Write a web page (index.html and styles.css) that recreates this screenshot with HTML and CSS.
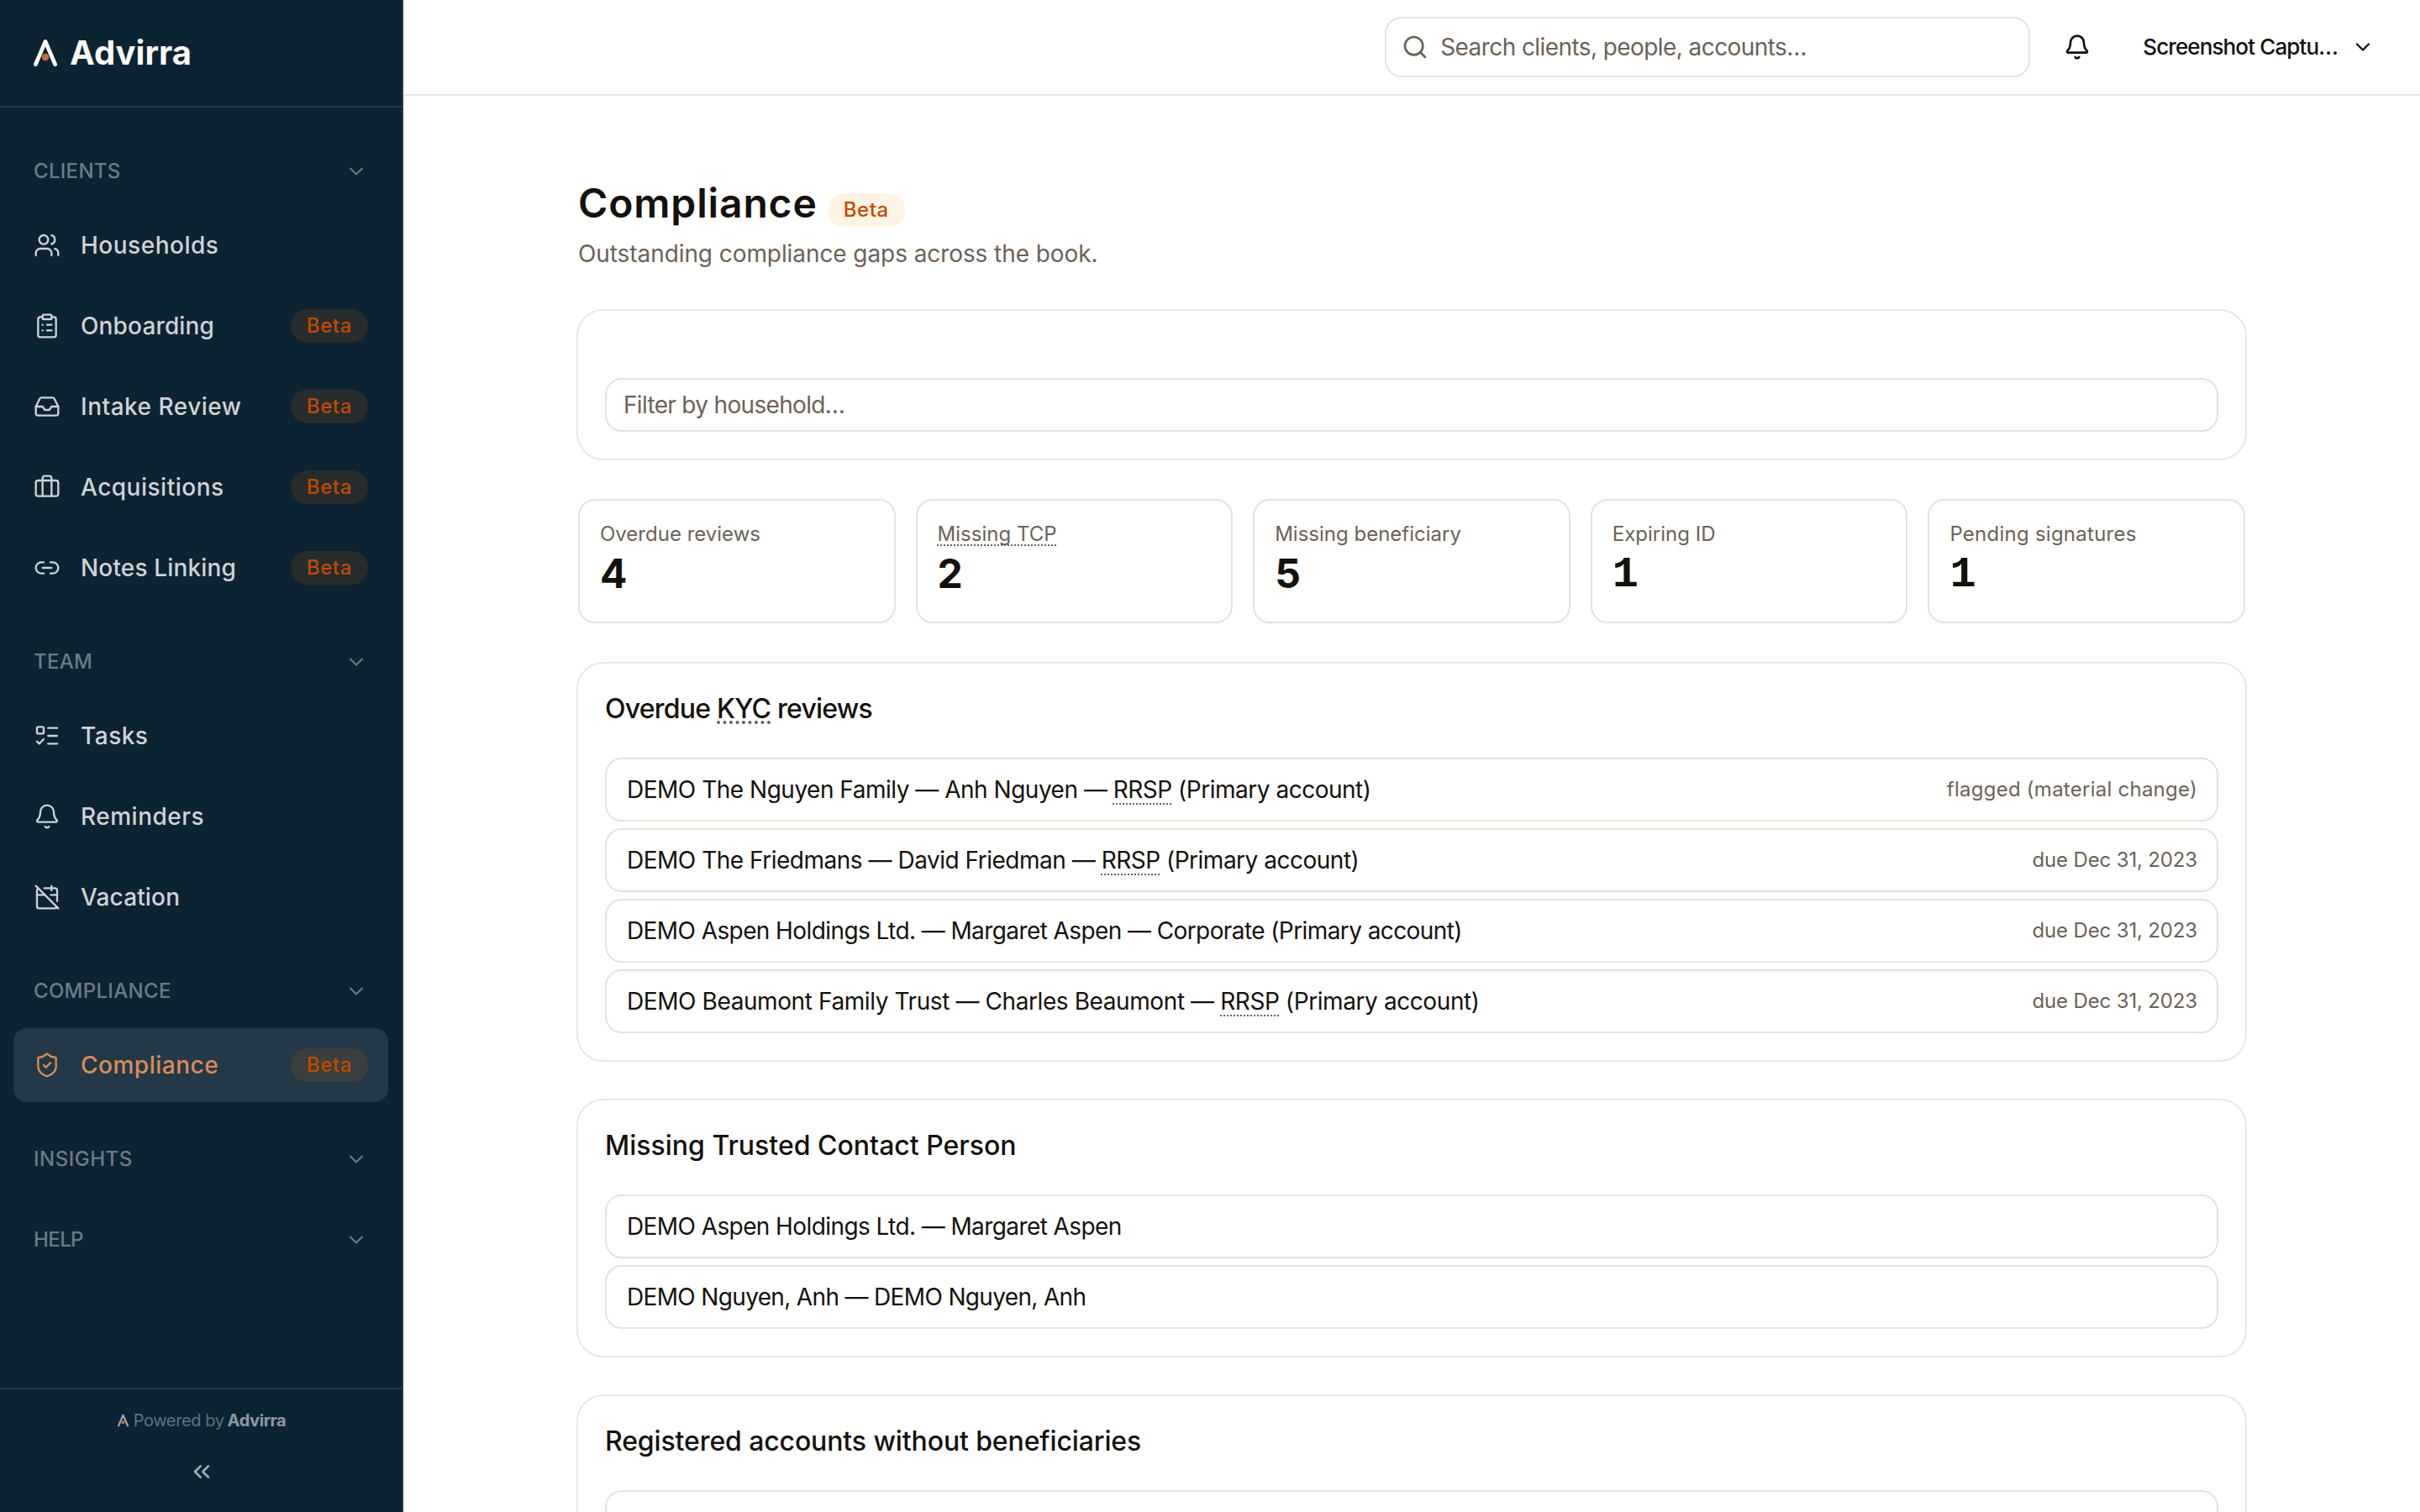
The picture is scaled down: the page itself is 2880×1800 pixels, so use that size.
FILE: index.html
```
<!doctype html>
<html lang="en">
  <head>
    <meta charset="utf-8">
    <title>Compliance - Advirra</title>
    <link rel="stylesheet" href="styles.css">
  </head>
  <body>
    <!-- shared icons -->
    <svg class="sprite">
      <symbol id="chevron" viewBox="0 0 24 24"><path d="m6 9 6 6 6-6"/></symbol>
      <symbol id="bell" viewBox="0 0 24 24"><path d="M10.268 21a2 2 0 0 0 3.464 0"/><path d="M3.262 15.326A1 1 0 0 0 4 17h16a1 1 0 0 0 .74-1.673C19.41 13.956 18 12.499 18 8A6 6 0 0 0 6 8c0 4.499-1.411 5.956-2.738 7.326"/></symbol>
      <symbol id="mark" viewBox="0 0 28 34"><path class="mark-leg" d="M2.4 30.6 14 3.4l11.6 27.2"/><circle class="mark-dot" cx="14" cy="22" r="4.2"/></symbol>
    </svg>

    <aside class="sidebar">
      <div class="brand">
        <svg class="brand-mark"><use href="#mark"/></svg>
        <span>Advirra</span>
      </div>

      <nav class="nav">
        <section>
          <h2 class="nav-title">CLIENTS <svg class="icon"><use href="#chevron"/></svg></h2>
          <ul class="nav-list">
            <li class="nav-item">
              <svg class="icon" viewBox="0 0 24 24"><path d="M16 21v-2a4 4 0 0 0-4-4H6a4 4 0 0 0-4 4v2"/><path d="M16 3.128a4 4 0 0 1 0 7.744"/><path d="M22 21v-2a4 4 0 0 0-3-3.87"/><circle cx="9" cy="7" r="4"/></svg>
              <span class="wide">Households</span>
            </li>
            <li class="nav-item">
              <svg class="icon" viewBox="0 0 24 24"><rect width="8" height="4" x="8" y="2" rx="1"/><path d="M16 4h2a2 2 0 0 1 2 2v14a2 2 0 0 1-2 2H6a2 2 0 0 1-2-2V6a2 2 0 0 1 2-2h2"/><path d="M12 11h4"/><path d="M12 16h4"/><path d="M8 11h.01"/><path d="M8 16h.01"/></svg>
              <span>Onboarding</span><em class="badge">Beta</em>
            </li>
            <li class="nav-item">
              <svg class="icon" viewBox="0 0 24 24"><path d="M22 12h-6l-2 3h-4l-2-3H2"/><path d="M5.45 5.11 2 12v6a2 2 0 0 0 2 2h16a2 2 0 0 0 2-2v-6l-3.45-6.89A2 2 0 0 0 16.76 4H7.24a2 2 0 0 0-1.79 1.11z"/></svg>
              <span class="wide">Intake Review</span><em class="badge">Beta</em>
            </li>
            <li class="nav-item">
              <svg class="icon" viewBox="0 0 24 24"><path d="M16 20V4a2 2 0 0 0-2-2h-4a2 2 0 0 0-2 2v16"/><rect width="20" height="14" x="2" y="6" rx="2"/></svg>
              <span class="wide">Acquisitions</span><em class="badge">Beta</em>
            </li>
            <li class="nav-item">
              <svg class="icon" viewBox="0 0 24 24"><path d="M9 17H7A5 5 0 0 1 7 7h2"/><path d="M15 7h2a5 5 0 1 1 0 10h-2"/><path d="M8 12h8"/></svg>
              <span>Notes Linking</span><em class="badge">Beta</em>
            </li>
          </ul>
        </section>

        <section>
          <h2 class="nav-title">TEAM <svg class="icon"><use href="#chevron"/></svg></h2>
          <ul class="nav-list">
            <li class="nav-item">
              <svg class="icon" viewBox="0 0 24 24"><path d="M13 5h8"/><path d="M13 12h8"/><path d="M13 19h8"/><path d="m3 17 2 2 4-4"/><rect x="3" y="4" width="6" height="6" rx="1"/></svg>
              <span class="wide">Tasks</span>
            </li>
            <li class="nav-item">
              <svg class="icon"><use href="#bell"/></svg>
              <span class="wide">Reminders</span>
            </li>
            <li class="nav-item">
              <svg class="icon" viewBox="0 0 24 24"><path d="M4.2 4.2A2 2 0 0 0 3 6v14a2 2 0 0 0 2 2h14a2 2 0 0 0 1.82-1.18"/><path d="M21 15.5V6a2 2 0 0 0-2-2H9.5"/><path d="M16 2v4"/><path d="M3 10h7"/><path d="M21 10h-5.5"/><path d="m2 2 20 20"/></svg>
              <span>Vacation</span>
            </li>
          </ul>
        </section>

        <section>
          <h2 class="nav-title">COMPLIANCE <svg class="icon"><use href="#chevron"/></svg></h2>
          <ul class="nav-list">
            <li class="nav-item active">
              <svg class="icon" viewBox="0 0 24 24"><path d="M20 13c0 5-3.5 7.5-7.66 8.95a1 1 0 0 1-.67-.01C7.5 20.5 4 18 4 13V6a1 1 0 0 1 1-1c2 0 4.5-1.2 6.24-2.72a1.17 1.17 0 0 1 1.52 0C14.51 3.81 17 5 19 5a1 1 0 0 1 1 1z"/><path d="m9 12 2 2 4-4"/></svg>
              <span class="wide">Compliance</span><em class="badge">Beta</em>
            </li>
          </ul>
        </section>

        <section>
          <h2 class="nav-title wide">INSIGHTS <svg class="icon"><use href="#chevron"/></svg></h2>
        </section>
        <section>
          <h2 class="nav-title help">HELP <svg class="icon"><use href="#chevron"/></svg></h2>
        </section>
      </nav>

      <div class="sidebar-foot">
        <p class="powered"><svg class="powered-mark"><use href="#mark"/></svg><span>Powered by</span> <b>Advirra</b></p>
        <svg class="icon collapse" viewBox="0 0 24 24"><path d="m11 17-5-5 5-5"/><path d="m18 17-5-5 5-5"/></svg>
      </div>
    </aside>

    <div class="page">
      <header class="topbar">
        <div class="search">
          <svg class="icon" viewBox="0 0 24 24"><path d="m21 21-4.34-4.34"/><circle cx="11" cy="11" r="8"/></svg>
          <span>Search clients, people, accounts…</span>
        </div>
        <svg class="icon bell"><use href="#bell"/></svg>
        <div class="user">
          <span>Screenshot Captu…</span>
          <svg class="icon"><use href="#chevron"/></svg>
        </div>
      </header>

      <main class="content">
        <div class="heading">
          <h1>Compliance</h1>
          <em class="badge">Beta</em>
        </div>
        <p class="subtitle">Outstanding compliance gaps across the book.</p>

        <div class="card filter-card">
          <div class="filter">Filter by household…</div>
        </div>

        <div class="stats">
          <div class="stat"><span class="stat-label">Overdue reviews</span><strong>4</strong></div>
          <div class="stat"><span class="stat-label"><abbr>Missing TCP</abbr></span><strong>2</strong></div>
          <div class="stat"><span class="stat-label">Missing beneficiary</span><strong>5</strong></div>
          <div class="stat"><span class="stat-label">Expiring ID</span><strong class="one">1</strong></div>
          <div class="stat"><span class="stat-label wide">Pending signatures</span><strong class="one">1</strong></div>
        </div>

        <section class="card">
          <h2 class="card-title kyc">Overdue <abbr>KYC</abbr> reviews</h2>
          <ul class="rows">
            <li><span>DEMO The Nguyen Family — Anh Nguyen — <abbr>RRSP</abbr> (Primary account)</span><small class="flag">flagged (material change)</small></li>
            <li><span>DEMO The Friedmans — David Friedman — <abbr>RRSP</abbr> (Primary account)</span><small>due Dec 31, 2023</small></li>
            <li><span class="tight">DEMO Aspen Holdings Ltd. — Margaret Aspen — Corporate (Primary account)</span><small>due Dec 31, 2023</small></li>
            <li><span class="loose">DEMO Beaumont Family Trust — Charles Beaumont — <abbr>RRSP</abbr> (Primary account)</span><small>due Dec 31, 2023</small></li>
          </ul>
        </section>

        <section class="card">
          <h2 class="card-title">Missing Trusted Contact Person</h2>
          <ul class="rows">
            <li><span class="tight">DEMO Aspen Holdings Ltd. — Margaret Aspen</span></li>
            <li><span class="tighter">DEMO Nguyen, Anh — DEMO Nguyen, Anh</span></li>
          </ul>
        </section>

        <section class="card">
          <h2 class="card-title accounts">Registered accounts without beneficiaries</h2>
          <ul class="rows">
            <li></li>
          </ul>
        </section>
      </main>
    </div>
  </body>
</html>
```
FILE: styles.css
```
* {
  box-sizing: border-box;
  margin: 0;
  padding: 0;
}
body {
  display: flex;
  width: 2880px;
  height: 1800px;
  overflow: hidden;
  background: #fff;
  color: #14110d;
  font-family: Inter, "Liberation Sans", sans-serif;
  font-size: 28px;
  line-height: 40px;
}
ul {
  list-style: none;
}
em {
  font-style: normal;
}
.sprite {
  position: absolute;
  width: 0;
  height: 0;
}
.icon {
  width: 32px;
  height: 32px;
  flex: none;
  fill: none;
  stroke: currentColor;
  stroke-width: 1.75;
  stroke-linecap: round;
  stroke-linejoin: round;
}
.mark-leg {
  fill: none;
  stroke: currentColor;
  stroke-width: 4.8;
  stroke-linecap: round;
  stroke-linejoin: round;
}
.mark-dot {
  fill: #c56a3d;
}
.badge {
  height: 40px;
  padding: 0 19px;
  border-radius: 20px;
  background: #fff3e3;
  color: #c04a00;
  font-size: 24px;
  font-weight: 500;
  letter-spacing: 0.6px;
  line-height: 40px;
}

/* sidebar */
.sidebar {
  display: flex;
  flex-direction: column;
  flex: none;
  width: 480px;
  border-right: 2px solid #243947;
  background: #0c2332;
}
.brand {
  display: flex;
  align-items: center;
  gap: 15px;
  height: 128px;
  padding: 0 40px;
  border-bottom: 2px solid #243947;
  color: #fafafa;
  font-size: 40px;
  font-weight: 700;
}
.brand-mark {
  width: 28px;
  height: 34px;
}
.nav {
  display: flex;
  flex-direction: column;
  gap: 24px;
  flex: 1;
  padding: 40px 16px 0;
}
.nav-title {
  display: flex;
  align-items: center;
  justify-content: space-between;
  height: 72px;
  padding: 0 24px;
  color: #6d7b84;
  font-size: 24px;
  font-weight: 500;
  letter-spacing: 0.3px;
}
.nav-title.wide {
  letter-spacing: 0.5px;
}
.nav-title.help {
  letter-spacing: -0.6px;
}
.nav-title .icon {
  width: 28px;
  height: 28px;
}
.nav-list {
  display: flex;
  flex-direction: column;
  gap: 8px;
  padding: 8px 0;
}
.nav-item {
  display: flex;
  align-items: center;
  height: 88px;
  padding: 0 24px;
  border-radius: 16px;
  color: #ced3d6;
  font-weight: 500;
  letter-spacing: 0.15px;
}
.nav-item span {
  margin-left: 24px;
}
.nav-item .wide {
  letter-spacing: 0.5px;
}
.nav-item .badge {
  margin-left: auto;
  background: rgba(192, 100, 20, 0.15);
}
.nav-item.active {
  background: #243947;
  color: #d88c5a;
}
.sidebar-foot {
  display: flex;
  flex-direction: column;
  align-items: center;
  height: 148px;
  border-top: 2px solid #243947;
}
.powered {
  display: flex;
  align-items: center;
  margin-top: 17px;
  padding-left: 2px;
  color: #61717c;
  font-size: 20px;
  letter-spacing: -0.4px;
}
.powered-mark {
  width: 13px;
  height: 16px;
  margin-right: 6px;
  color: #9ca6ac;
}
.powered-mark .mark-dot {
  opacity: 0.6;
}
.powered b {
  margin-left: 4px;
  color: #8e99a1;
}
.collapse {
  width: 32px;
  height: 32px;
  margin: 25px 0 0 2px;
  color: #a3adb3;
  stroke-width: 2;
}

/* top bar */
.page {
  flex: 1;
  min-width: 0;
  height: 1800px;
  overflow: hidden;
}
.topbar {
  display: flex;
  align-items: center;
  justify-content: flex-end;
  height: 114px;
  padding: 0 54px 0 0;
  border-bottom: 2px solid #e8e4df;
}
.search {
  display: flex;
  align-items: center;
  gap: 14px;
  width: 768px;
  height: 72px;
  padding: 0 18px;
  border: 2px solid #e7e5df;
  border-radius: 20px;
  color: #6c6257;
  letter-spacing: -0.58px;
}
.search .icon {
  stroke-width: 2;
}
.bell {
  margin: 0 62px 0 40px;
  stroke-width: 2;
}
.user {
  display: flex;
  align-items: center;
  gap: 16px;
  font-size: 26px;
  font-weight: 500;
  letter-spacing: -0.88px;
}
.user .icon {
  width: 28px;
  height: 28px;
  stroke-width: 2;
}

/* content */
.content {
  display: flex;
  flex-direction: column;
  width: 1988px;
  margin: 96px 0 0 206px;
}
.heading {
  display: flex;
  align-items: flex-start;
  gap: 12px;
  height: 66px;
  padding-left: 2px;
}
.heading h1 {
  font-size: 48px;
  font-weight: 600;
  letter-spacing: 0.85px;
  line-height: 64px;
}
.heading .badge {
  margin-top: 20px;
}
.subtitle {
  height: 40px;
  margin: 6px 0 46px;
  padding-left: 2px;
  color: #6c6257;
  letter-spacing: -0.08px;
}
.card {
  flex: none;
  margin-bottom: 44px;
  padding: 32px;
  border: 2px solid #e8e8e7;
  border-radius: 32px;
}
.filter-card {
  height: 180px;
  padding-top: 80px;
}
.filter {
  height: 64px;
  padding: 0 20px;
  border: 2px solid #e6e2dc;
  border-radius: 20px;
  color: #6c6257;
  letter-spacing: -0.68px;
  line-height: 60px;
}
.stats {
  display: grid;
  grid-template-columns: repeat(5, 1fr);
  gap: 24px;
  margin: 2px 2px 46px;
}
.stat {
  height: 148px;
  padding: 22px 24px;
  border: 2px solid #e6e2dc;
  border-radius: 20px;
}
.stat-label {
  display: block;
  height: 36px;
  color: #6c6257;
  font-size: 24px;
  line-height: 36px;
}
.stat-label.wide {
  letter-spacing: 0.25px;
}
.stat-label abbr {
  text-underline-offset: 4px;
}
.stat strong {
  display: block;
  font-size: 48px;
  font-weight: 700;
  line-height: 58px;
}
/* slab foot on the one */
.stat .one {
  font-family: "Liberation Mono", monospace;
  font-size: 52px;
  line-height: 62px;
}
abbr {
  text-decoration: underline dotted #6c6257 2px;
  text-underline-offset: 6px;
  text-decoration-skip-ink: none;
}
.card-title {
  height: 44px;
  margin-bottom: 36px;
  font-size: 32px;
  font-weight: 500;
  line-height: 44px;
}
.kyc {
  letter-spacing: -0.78px;
}
.kyc abbr {
  text-decoration-thickness: 4px;
  text-underline-offset: 3px;
}
.accounts {
  letter-spacing: -0.12px;
}
.rows {
  display: flex;
  flex-direction: column;
  gap: 8px;
}
.rows li {
  display: flex;
  align-items: center;
  justify-content: space-between;
  height: 76px;
  padding: 0 23px 0 24px;
  border: 2px solid #e6e2dc;
  border-radius: 20px;
  letter-spacing: -0.49px;
}
.rows .tight {
  letter-spacing: -0.59px;
}
.rows .tighter {
  letter-spacing: -0.66px;
}
.rows .loose {
  letter-spacing: -0.41px;
}
.rows small {
  color: #6c6257;
  font-size: 24px;
  letter-spacing: -0.15px;
}
.rows .flag {
  letter-spacing: 0.25px;
}
```
